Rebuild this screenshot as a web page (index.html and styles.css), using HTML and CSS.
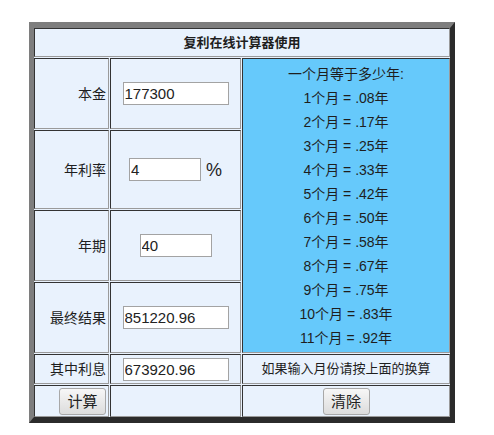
FILE: index.html
```html
<!DOCTYPE html>
<html lang="zh-CN">
<head>
<meta charset="utf-8">
<title>复利在线计算器</title>
<link rel="stylesheet" href="styles.css">
</head>
<body>
<div class="calc">
  <div class="cell head">复利在线计算器使用</div>

  <div class="cell label">本金</div>
  <div class="cell field"><input class="inp wide" type="text" value="177300"></div>
  <div class="cell blue">
    <div class="line">一个月等于多少年:</div>
    <div class="line">1个月 = .08年</div>
    <div class="line">2个月 = .17年</div>
    <div class="line">3个月 = .25年</div>
    <div class="line">4个月 = .33年</div>
    <div class="line">5个月 = .42年</div>
    <div class="line">6个月 = .50年</div>
    <div class="line">7个月 = .58年</div>
    <div class="line">8个月 = .67年</div>
    <div class="line">9个月 = .75年</div>
    <div class="line">10个月 = .83年</div>
    <div class="line">11个月 = .92年</div>
  </div>

  <div class="cell label">年利率</div>
  <div class="cell field"><input class="inp narrow" type="text" value="4"><span class="pct">%</span></div>

  <div class="cell label">年期</div>
  <div class="cell field"><input class="inp narrow" type="text" value="40"></div>

  <div class="cell label">最终结果</div>
  <div class="cell field"><input class="inp wide" type="text" value="851220.96"></div>

  <div class="cell label">其中利息</div>
  <div class="cell field"><input class="inp wide" type="text" value="673920.96"></div>
  <div class="cell note">如果输入月份请按上面的换算</div>

  <div class="cell label"><button class="btn" type="button">计算</button></div>
  <div class="cell"></div>
  <div class="cell center"><button class="btn" type="button">清除</button></div>
</div>
</body>
</html>
```

FILE: styles.css
```css
html, body {
  margin: 0;
  padding: 0;
  background: #ffffff;
}

body {
  font-family: "Liberation Sans", "Noto Sans CJK SC", sans-serif;
  color: #1e1e1e;
  padding: 22px 0 0 29px;
}

.calc {
  display: grid;
  grid-template-columns: 75px 131px 208px;
  grid-template-rows: 29px 71px 79px 71px 71px 30px 32px;
  gap: 1px;
  width: fit-content;
  border-style: solid;
  border-width: 6px 5px;
  border-color: #7e7e7e #2b2b2b #2b2b2b #7e7e7e;
  background: #e9f2fd;
}

.cell {
  box-sizing: border-box;
  border: 1px solid;
  border-color: #333333 #9a9a9a #9a9a9a #333333;
  background: #e9f2fd;
  display: flex;
  align-items: center;
  min-width: 0;
}

.head {
  grid-column: 1 / 4;
  justify-content: center;
  font-size: 13px;
  font-weight: bold;
  line-height: 16px;
}

.label {
  justify-content: flex-end;
  padding-right: 2px;
  font-size: 14px;
  line-height: 16px;
}

.field {
  justify-content: center;
}

.center {
  justify-content: center;
}

.blue {
  grid-column: 3;
  grid-row: 2 / 6;
  background: #66c9fb;
  flex-direction: column;
  justify-content: center;
  font-size: 14px;
}

.line {
  line-height: 24px;
  white-space: nowrap;
}

.note {
  justify-content: center;
  font-size: 13px;
  line-height: 16px;
  white-space: nowrap;
}

.inp {
  box-sizing: border-box;
  height: 23px;
  margin: 0;
  padding: 0 1px;
  border: 1px solid #a3a3a3;
  background: #ffffff;
  font-family: "Liberation Sans", "Noto Sans CJK SC", sans-serif;
  font-size: 15px;
  color: #222222;
  outline: none;
}

.wide {
  width: 106px;
}

.narrow {
  width: 72px;
}

.pct {
  margin-left: 5px;
  font-size: 18px;
  line-height: 20px;
}

.btn {
  box-sizing: border-box;
  width: 47px;
  height: 27px;
  margin: 0;
  padding: 0;
  border: 1px solid #a8a8a8;
  border-radius: 3px;
  background: linear-gradient(#f7f7f7, #dcdcdc);
  font-family: "Liberation Sans", "Noto Sans CJK SC", sans-serif;
  font-size: 15px;
  line-height: 25px;
  color: #222222;
}
```
